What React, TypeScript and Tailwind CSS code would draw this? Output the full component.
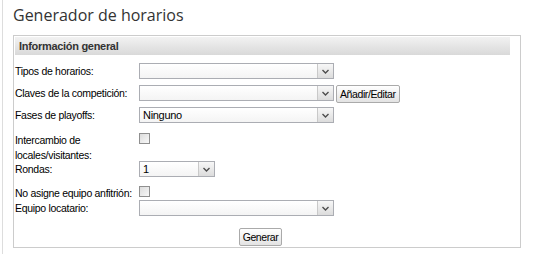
import React from "react";

function Chevron() {
  return (
    <svg width="7" height="5" viewBox="0 0 7 5" className="block">
      <path d="M0.5 1 L3.5 4 L6.5 1" fill="none" stroke="#4d4d4d" strokeWidth="1.4" />
    </svg>
  );
}

function FakeSelect({ value, width }: { value?: string; width: string }) {
  return (
    <div className={`flex h-[16px] ${width} border border-[#abadb3] bg-gradient-to-b from-white to-[#f4f4f4]`}>
      <div className="flex-1 px-[3px] text-[11px] leading-[14px] tracking-[-0.3px] text-black">{value}</div>
      <div className="flex w-[16px] items-center justify-center border-l border-[#c9c9c9] bg-gradient-to-b from-[#f7f7f7] to-[#dcdcdc]">
        <Chevron />
      </div>
    </div>
  );
}

function Check() {
  return <div className="h-[11px] w-[11px] border border-[#8f8f8f] bg-gradient-to-br from-[#dcdcdc] to-[#f8f8f8]" />;
}

function Row({ label, children, className = "" }: { label: React.ReactNode; children: React.ReactNode; className?: string }) {
  return (
    <div className={`flex items-start ${className}`}>
      <div className="w-[124px] shrink-0 whitespace-nowrap pt-[1px] text-[10.5px] leading-[15px] tracking-[-0.3px] text-black">{label}</div>
      {children}
    </div>
  );
}

export default function App() {
  return (
    <div className="h-[254px] w-[534px] bg-white pl-[2px]" style={{ fontFamily: "'Liberation Sans', Arial, sans-serif" }}>
      <div className="h-full border-l border-[#dddddd] pl-[10px] pr-[13px]">
        <h1 className="pt-[5px] text-[16px] leading-[20px] text-[#333]" style={{ fontFamily: "'Open Sans', 'Noto Sans', sans-serif" }}>
          Generador de horarios
        </h1>
        <div className="mt-[10px] h-[213px] border border-[#cccccc] pt-[1px] pl-[1px] pr-[10px]">
          <div className="h-[18px] bg-gradient-to-b from-[#f2f2f2] to-[#d9d9d9] pl-[4px] text-[11px] font-bold leading-[18px] tracking-[-0.3px] text-[#333]">
            Información general
          </div>
          <div className="flex flex-col pt-[8px]">
            <Row label="Tipos de horarios:" className="h-[22px]">
              <FakeSelect width="w-[195px]" />
            </Row>
            <Row label="Claves de la competición:" className="h-[22px]">
              <FakeSelect width="w-[195px]" />
              <button className="ml-[2px] h-[18px] rounded-[2px] border border-[#aaa] bg-gradient-to-b from-white to-[#e3e3e3] px-[3px] text-[10.5px] leading-[14px] tracking-[-0.4px] text-black">
                Añadir/Editar
              </button>
            </Row>
            <Row label="Fases de playoffs:" className="h-[25px]">
              <FakeSelect width="w-[195px]" value="Ninguno" />
            </Row>
            <Row label={<>Intercambio de<br />locales/visitantes:</>} className="h-[29px]">
              <div className="pt-[1px]"><Check /></div>
            </Row>
            <Row label="Rondas:" className="h-[24px]">
              <FakeSelect width="w-[76px]" value="1" />
            </Row>
            <Row label="No asigne equipo anfitrión:" className="h-[15px]">
              <div className="pt-[1px]"><Check /></div>
            </Row>
            <Row label="Equipo locatario:" className="h-[28px]">
              <FakeSelect width="w-[195px]" />
            </Row>
            <div className="flex justify-center pr-[4px]">
              <button className="h-[18px] rounded-[2px] border border-[#aaa] bg-gradient-to-b from-white to-[#e3e3e3] px-[3px] text-[10.5px] leading-[14px] tracking-[-0.4px] text-black">
                Generar
              </button>
            </div>
          </div>
        </div>
      </div>
    </div>
  );
}
